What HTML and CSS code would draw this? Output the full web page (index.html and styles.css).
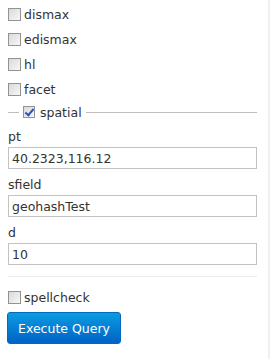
FILE: index.html
```html
<!DOCTYPE html>
<html lang="en">
<head>
  <meta charset="UTF-8">
  <title>Query</title>
  <link rel="stylesheet" href="styles.css">
</head>
<body>
  <div class="panel">
    <label class="check-row"><input type="checkbox" class="cb"> dismax</label>
    <label class="check-row"><input type="checkbox" class="cb"> edismax</label>
    <label class="check-row"><input type="checkbox" class="cb"> hl</label>
    <label class="check-row"><input type="checkbox" class="cb"> facet</label>

    <fieldset class="group">
      <legend><label class="legend-label"><input type="checkbox" class="cb small" checked> spatial</label></legend>

      <label class="field-label" for="pt">pt</label>
      <input type="text" id="pt" class="text-input" value="40.2323,116.12">

      <label class="field-label" for="sfield">sfield</label>
      <input type="text" id="sfield" class="text-input" value="geohashTest">

      <label class="field-label" for="d">d</label>
      <input type="text" id="d" class="text-input" value="10">
    </fieldset>

    <label class="check-row spell"><input type="checkbox" class="cb"> spellcheck</label>

    <button type="button" class="submit-btn">Execute Query</button>
  </div>
</body>
</html>
```

FILE: styles.css
```css
body {
  font-family: "DejaVu Sans", Verdana, sans-serif;
  font-size: 12.5px;
  color: #333;
  background: #fff;
  margin: 0;
}

.panel {
  width: 252px;
  height: 359px;
  padding: 2px 8px 0 8px;
  box-sizing: content-box;
  border-right: 2px solid #f0f0f0;
}

.check-row {
  display: flex;
  align-items: center;
  gap: 3px;
  height: 25px;
}

.cb {
  appearance: none;
  -webkit-appearance: none;
  width: 13px;
  height: 13px;
  margin: 0;
  border: 1px solid #939393;
  background: linear-gradient(135deg, #dadada, #f7f7f7);
  box-sizing: border-box;
  position: relative;
  flex-shrink: 0;
}

.cb.small {
  width: 12px;
  height: 12px;
}

.cb:checked::after {
  content: "";
  position: absolute;
  left: 3px;
  top: 0px;
  width: 3px;
  height: 7px;
  border: solid #2b4fc9;
  border-width: 0 2px 2px 0;
  transform: rotate(40deg);
}

.group {
  border: 0;
  border-top: 1px solid #bdbdbd;
  border-bottom: 1px solid #ececec;
  margin: 0;
  padding: 0 0 11px 0;
  width: 249px;
}

.group legend {
  padding: 0 4px;
  margin-left: 11px;
}

.legend-label {
  display: flex;
  align-items: center;
  gap: 5px;
  height: 20px;
}

.field-label {
  display: block;
  height: 20px;
  line-height: 20px;
  margin-top: 6px;
}

.group legend + .field-label {
  margin-top: 5px;
}

.text-input {
  display: block;
  width: 249px;
  height: 22px;
  box-sizing: border-box;
  border: 1px solid #c2c2c2;
  padding: 0 3px;
  font-family: "DejaVu Sans", Verdana, sans-serif;
  font-size: 12.5px;
  color: #333;
  outline: none;
}

.spell {
  margin-top: 8px;
}

.submit-btn {
  margin: 2px 0 0 -1px;
  width: 114px;
  height: 32px;
  border: 1px solid #0667be;
  border-radius: 3px;
  background: linear-gradient(#0a9ce0, #0162c6);
  color: #fff;
  font-family: "DejaVu Sans", Verdana, sans-serif;
  font-size: 12.5px;
  padding: 0;
  cursor: pointer;
}
```
